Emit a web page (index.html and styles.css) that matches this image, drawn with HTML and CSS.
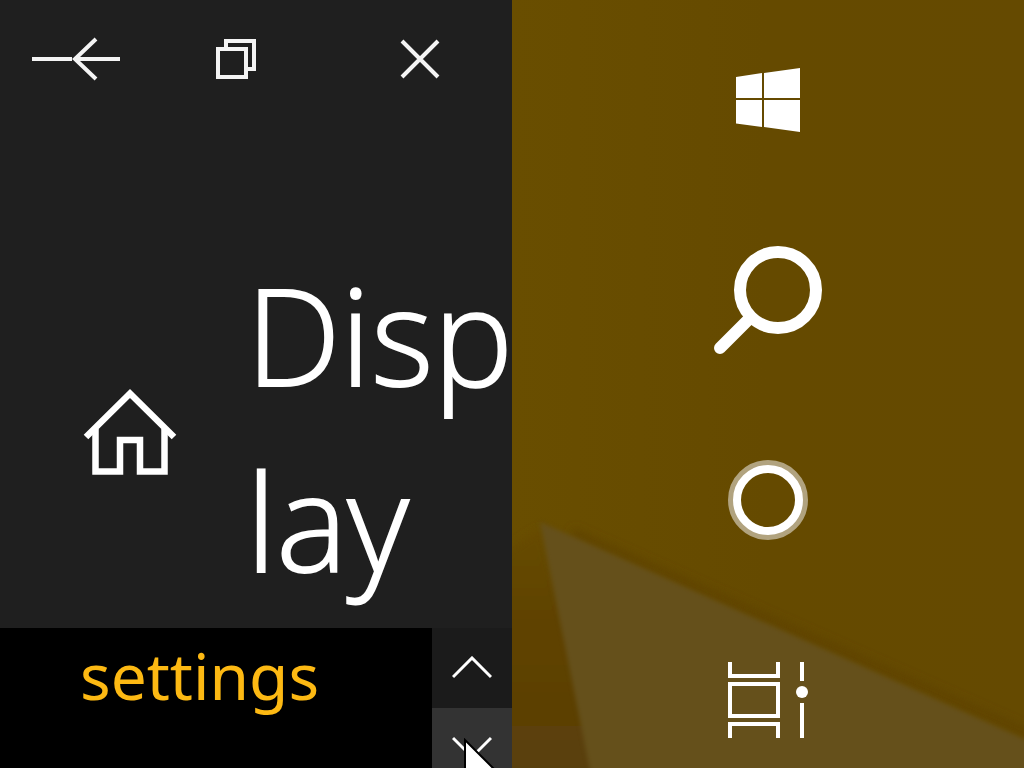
FILE: index.html
```html
<!DOCTYPE html>
<html lang="en">
<head>
<meta charset="utf-8">
<title>Display settings</title>
<link rel="stylesheet" href="styles.css">
</head>
<body>
<main class="screen">
  <section class="window">
    <div class="toolbar">
      <button class="tool tool-back" type="button" aria-label="Back">
        <svg width="88" height="48" viewBox="0 0 88 48"><path d="M0 24H40M43 24H88" stroke-width="4"/><path d="M64 4L43 24L64 44" stroke-width="4"/></svg>
      </button>
      <button class="tool" type="button" aria-label="Restore">
        <svg width="40" height="40" viewBox="0 0 40 40"><path d="M2 10H30V38H2ZM10 10V2H38V30H30" stroke-width="4"/></svg>
      </button>
      <button class="tool" type="button" aria-label="Close">
        <svg width="40" height="40" viewBox="0 0 40 40"><path d="M2 2L38 38M38 2L2 38" stroke-width="4"/></svg>
      </button>
    </div>
    <div class="content">
      <a class="home" href="#" aria-label="Home">
        <svg width="96" height="96" viewBox="0 0 96 96" stroke-width="6.500"><path d="M4 58L48 14.500L92 58"/><path d="M13.5 50V92.500H38V61H58V92.500H82.500V50"/></svg>
      </a>
      <h1 class="title">Disp<br>lay</h1>
    </div>
    <div class="bottom">
      <div class="caption"><a class="link" href="#">settings</a></div>
      <div class="arrows">
        <button class="arrow" type="button" aria-label="Up">
          <svg width="40" height="24" viewBox="0 0 40 24" stroke-width="3"><path d="M1 21L20 2L39 21"/></svg>
        </button>
        <button class="arrow arrow-active" type="button" aria-label="Down">
          <svg width="40" height="24" viewBox="0 0 40 24" stroke-width="3"><path d="M1 2L20 21L39 2"/></svg>
        </button>
        <svg class="cursor" width="48" height="64" viewBox="0 0 48 64"><path d="M2 2V60L16 46L24 62L32 58L24 43H43Z" fill="#fff" stroke="#000" stroke-width="2"/></svg>
      </div>
    </div>
  </section>
  <nav class="taskbar" aria-label="Taskbar">
    <svg class="wallpaper" viewBox="0 0 512 768" preserveAspectRatio="none" aria-hidden="true">
      <defs>
        <linearGradient id="amber"><stop offset="0" stop-color="#694e00"/><stop offset=".5" stop-color="#654a00"/><stop offset="1" stop-color="#654a01"/></linearGradient>
        <linearGradient id="edge" x1="0" y1="0" x2="0" y2="1"><stop offset="0" stop-color="#674b00"/><stop offset=".35" stop-color="#5f4204"/><stop offset="1" stop-color="#584008"/></linearGradient>
        <filter id="soft"><feGaussianBlur stdDeviation="5"/></filter>
      </defs>
      <rect width="512" height="768" fill="url(#amber)"/>
      <g filter="url(#soft)">
        <path d="M-20 560L29 528L110 800H-20Z" fill="url(#edge)"/>
        <path d="M60 532L532 740" fill="none" stroke="#5f4300" stroke-width="8"/>
      </g>
      <path class="facet" d="M28 522L532 748V800H84Z"/>
    </svg>
    <button class="task" type="button" aria-label="Start">
      <svg width="64" height="64" viewBox="0 0 64 64"><path fill="#fff" stroke="none" d="M0 9L26 5V30H0ZM28 5L64 0V30H28ZM0 32H26V59L0 55.500ZM28 32H64V64L28 59Z"/></svg>
    </button>
    <button class="task" type="button" aria-label="Search">
      <svg width="108" height="108" viewBox="0 0 108 108" stroke-width="12"><circle cx="64" cy="44" r="38"/><path d="M36 72L6 102" stroke-linecap="round"/></svg>
    </button>
    <button class="task" type="button" aria-label="Cortana">
      <svg width="80" height="80" viewBox="0 0 80 80"><circle cx="40" cy="40" r="37" stroke="#b1a37f" stroke-width="6"/><circle cx="40" cy="40" r="31" stroke-width="8"/></svg>
    </button>
    <button class="task" type="button" aria-label="Task view">
      <svg width="80" height="76" viewBox="0 0 80 76" stroke-width="4"><path d="M2 0V14H50V0M2 22H50V54H2ZM2 76V62H50V76M74 0V19M74 41V76"/><circle cx="74" cy="30" r="6" fill="#fff" stroke="none"/></svg>
    </button>
  </nav>
</main>
</body>
</html>
```
FILE: styles.css
```css
* { box-sizing: border-box; }
body {
  margin: 0;
  background: #1f1f1f;
  color: #fff;
  font-family: "Noto Sans", "Open Sans", sans-serif;
}
button { margin: 0; padding: 0; border: 0; background: none; color: inherit; }
svg { display: block; flex: none; fill: none; stroke: #fff; }
a { color: inherit; text-decoration: none; }

.screen {
  display: grid;
  grid-template-columns: 1fr 1fr;
  height: 100vh;
  overflow: hidden;
}
.window {
  display: grid;
  grid-template-rows: 118px 1fr 140px;
  min-width: 0;
  min-height: 0;
  background: #1f1f1f;
}
.toolbar {
  display: grid;
  grid-template-columns: 144fr 184fr 184fr;
}
.tool { display: flex; align-items: center; justify-content: center; }
.tool-back { padding-left: 8px; }
.tool svg { stroke: #f4f4f4; }

.content {
  display: flex;
  align-items: center;
  gap: 68px;
  min-width: 0;
  padding: 108px 0 0 82px;
}
.title {
  margin: 0;
  font-family: "Open Sans", "Noto Sans", sans-serif;
  font-size: 134px;
  font-weight: 300;
  line-height: 186px;
  -webkit-text-stroke: 2px #fff;
}

.bottom {
  display: grid;
  grid-template-columns: 1fr 80px;
  min-height: 0;
}
.caption { padding: 0 80px; background: #000; }
.link { color: #fdb913; font-size: 64px; line-height: 96px; }
.arrows { position: relative; overflow: hidden; background: #1b1b1b; }
.arrow {
  display: flex;
  align-items: center;
  justify-content: center;
  width: 100%;
  height: 80px;
}
.arrow-active { background: #333; }
.cursor { position: absolute; left: 31px; top: 110px; }

.taskbar {
  position: relative;
  display: grid;
  grid-auto-rows: 200px;
  min-width: 0;
  overflow: hidden;
  background: #654a01;
}
.wallpaper { position: absolute; inset: 0; width: 100%; height: 100%; stroke: none; }
.facet { fill: #65501b; filter: blur(2px); }
.task { position: relative; display: flex; align-items: center; justify-content: center; }
```
